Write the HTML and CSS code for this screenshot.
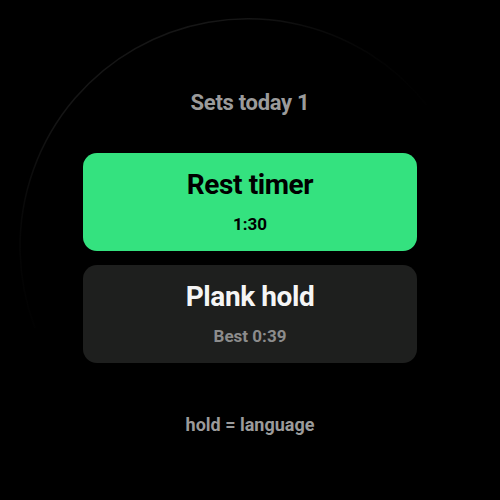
FILE: index.html
```html
<!DOCTYPE html>
<html>
<head>
<meta charset="utf-8">
<link rel="stylesheet" href="styles.css">
</head>
<body>
<div class="screen">
  <svg class="ring" width="500" height="500" viewBox="0 0 500 500">
    <defs>
      <linearGradient id="fade" x1="430" y1="100" x2="30" y2="340" gradientUnits="userSpaceOnUse">
        <stop offset="0" stop-color="#141414" stop-opacity="0"/>
        <stop offset="0.25" stop-color="#161616"/>
        <stop offset="0.7" stop-color="#151515"/>
        <stop offset="1" stop-color="#141414" stop-opacity="0"/>
      </linearGradient>
    </defs>
    <path d="M 426.6 105 A 228 228 0 0 0 35 328" fill="none" stroke="url(#fade)" stroke-width="1.5"/>
  </svg>
  <div class="content">
    <div class="header">Sets today 1</div>
    <div class="card card-primary">
      <div class="card-title">Rest timer</div>
      <div class="card-sub">1:30</div>
    </div>
    <div class="card card-secondary">
      <div class="card-title">Plank hold</div>
      <div class="card-sub">Best 0:39</div>
    </div>
    <div class="footer">hold = language</div>
  </div>
</div>
</body>
</html>
```
FILE: styles.css
```css
html, body {
  margin: 0;
  padding: 0;
  background: #000;
}
.screen {
  position: relative;
  width: 500px;
  height: 500px;
  background: #000;
  overflow: hidden;
  font-family: Roboto, "Liberation Sans", sans-serif;
}
.ring {
  position: absolute;
  left: 0;
  top: 0;
}
.content {
  position: relative;
  display: flex;
  flex-direction: column;
  align-items: center;
  padding-top: 90px;
}
.header {
  font-size: 22px;
  font-weight: 700;
  color: #9b9b9b;
  line-height: 26px;
  letter-spacing: -0.3px;
}
.card {
  box-sizing: border-box;
  width: 334px;
  height: 98px;
  border-radius: 14px;
  display: flex;
  flex-direction: column;
  align-items: center;
  padding-top: 15px;
}
.card-primary {
  margin-top: 37px;
  background: #34e27f;
  color: #000;
}
.card-secondary {
  margin-top: 14px;
  background: #1e1f1e;
  color: #f5f5f5;
}
.card-title {
  font-size: 28px;
  font-weight: 700;
  line-height: 34px;
  letter-spacing: -0.4px;
}
.card-sub {
  margin-top: 11px;
  font-size: 17px;
  font-weight: 700;
  line-height: 22px;
}
.card-secondary .card-sub {
  color: #8c8c8c;
}
.footer {
  margin-top: 50px;
  font-size: 18px;
  font-weight: 700;
  color: #9b9b9b;
  line-height: 24px;
}
```
